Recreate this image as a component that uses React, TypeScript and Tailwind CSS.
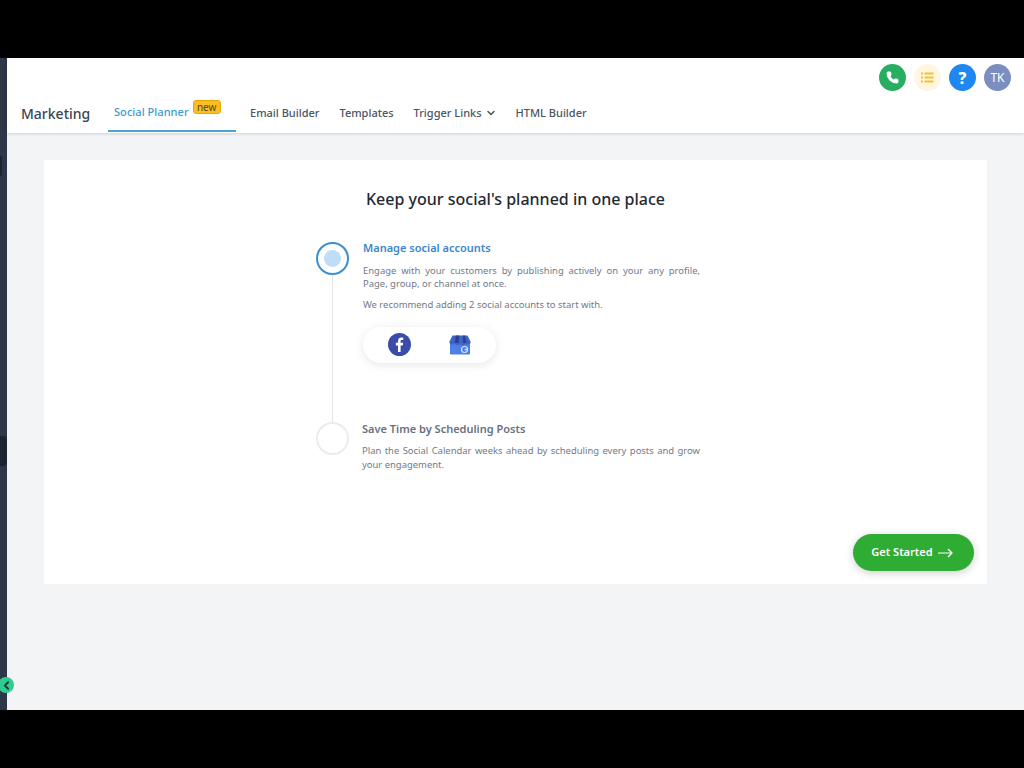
import React from 'react';
import { ChevronDown, ChevronLeft, Phone } from 'lucide-react';

const tabs = ['Email Builder', 'Templates'];

const App: React.FC = () => {
  return (
    <div className="relative h-[768px] w-[1024px] overflow-hidden bg-black pt-[58px] font-['Noto_Sans','Open_Sans',sans-serif]">
      <div className="flex h-[652px]">
        {/* collapsed sidebar */}
        <div className="relative w-[7px] shrink-0 bg-[#2d3748]">
          <div className="absolute left-0 top-[98px] h-[20px] w-[2px] rounded-r bg-[#1c2432]" />
          <div className="absolute left-0 top-[378px] h-[30px] w-[7px] rounded-r bg-[#1c2432]" />
        </div>

        <div className="flex min-w-0 flex-1 flex-col bg-[#f3f4f6]">
          {/* header */}
          <header className="relative z-10 flex h-[75px] shrink-0 flex-col bg-white shadow-[0_1px_3px_rgba(0,0,0,0.15)]">
            <div className="flex justify-end gap-[8px] pr-[13px] pt-[6px]">
              <div className="flex h-[27px] w-[27px] items-center justify-center rounded-full bg-[#27ae60]">
                <Phone size={13} className="fill-white text-white" />
              </div>
              <div className="flex h-[27px] w-[27px] items-center justify-center rounded-full bg-[#fef6e0]">
                <svg width="13" height="11" viewBox="0 0 13 11" fill="#f5bf2e">
                  <rect x="0" y="0.5" width="2" height="2" />
                  <rect x="3.5" y="0.5" width="9" height="2" />
                  <rect x="0" y="4.5" width="2" height="2" />
                  <rect x="3.5" y="4.5" width="9" height="2" />
                  <rect x="0" y="8.5" width="2" height="2" />
                  <rect x="3.5" y="8.5" width="9" height="2" />
                </svg>
              </div>
              <div className="flex h-[27px] w-[27px] items-center justify-center rounded-full bg-[#1e88f0] text-[16px] font-extrabold leading-none text-white">
                ?
              </div>
              <div className="flex h-[27px] w-[27px] items-center justify-center rounded-full bg-[#7a8fc0] text-[12px] leading-none text-white">
                TK
              </div>
            </div>

            <div className="mt-[3px] flex flex-1 items-stretch pb-[1px] pl-[14px]">
              <div className="flex w-[87px] items-center text-[14px] font-medium text-[#3c4653]">Marketing</div>
              <div className="flex w-[128px] items-center border-b-2 border-[#4aa3d0] pl-[6px]">
                <span className="text-[11.1px] font-medium text-[#3d9bca]">Social Planner</span>
                <span className="mb-[11px] ml-[4px] flex h-[14px] w-[28px] items-center justify-center rounded-[3px] border border-[#e8a80c] bg-[#fbbf24] text-[10px] leading-none text-[#5a4306]">
                  new
                </span>
              </div>
              <div className="ml-[14px] flex items-center gap-[20px] text-[11px] font-medium text-[#4b5563]">
                {tabs.map((t) => (
                  <span key={t}>{t}</span>
                ))}
                <span className="flex items-center gap-[3px]">
                  Trigger Links
                  <ChevronDown size={12} strokeWidth={3} className="-mr-[1px]" />
                </span>
                <span>HTML Builder</span>
              </div>
            </div>
          </header>

          {/* body */}
          <main className="pl-[37px] pt-[27px]">
            <div className="flex h-[424px] w-[943px] flex-col bg-white">
              <h1 className="pt-[28px] text-center text-[16px] font-medium leading-[22px] text-[#1f2933]">
                Keep your social's planned in one place
              </h1>

              <div className="ml-[272px] mt-[32px] flex w-[384px] flex-col">
                {/* step 1 */}
                <div className="flex h-[180px]">
                  <div className="flex w-[33px] shrink-0 flex-col items-center">
                    <div className="flex h-[33px] w-[33px] shrink-0 items-center justify-center rounded-full border-2 border-[#3c8fcf]">
                      <div className="h-[17px] w-[17px] rounded-full bg-[#bfdcf8]" />
                    </div>
                    <div className="w-px flex-1 bg-[#e2e6ea]" />
                  </div>
                  <div className="ml-[14px] flex-1">
                    <div className="-mt-[1px] text-[11px] font-semibold leading-[13px] text-[#3b87c8]">Manage social accounts</div>
                    <p className="mt-[9.5px] text-justify text-[9.45px] leading-[13.5px] text-[#727a87]">
                      Engage with your customers by publishing actively on your any profile, Page, group, or channel at once.
                    </p>
                    <p className="mt-[7.5px] text-[9.45px] leading-[13.5px] text-[#727a87]">
                      We recommend adding 2 social accounts to start with.
                    </p>
                    <div className="mt-[15px] flex h-[36px] w-[133px] items-center rounded-full bg-white pl-[25px] shadow-[0_2px_10px_rgba(0,0,0,0.1)]">
                      <svg width="23" height="23" viewBox="0 0 23 23">
                        <circle cx="11.5" cy="11.5" r="11.5" fill="#3b4ba8" />
                        <path
                          d="M12.6 19v-6.6h2.2l.35-2.6H12.6V8.2c0-.75.2-1.25 1.3-1.25h1.35V4.65C15 4.6 14.2 4.55 13.3 4.55c-2 0-3.3 1.2-3.3 3.4v1.85H7.8v2.6H10V19h2.6z"
                          fill="#fff"
                        />
                      </svg>
                      <svg className="ml-[38px]" width="22" height="20" viewBox="0 0 22 20">
                        <path d="M1 8h20v10.5a1 1 0 0 1-1 1H2a1 1 0 0 1-1-1z" fill="#4a80e8" />
                        <path d="M3.5 0.5h15L21.5 6.5a2.6 2.6 0 0 1-5.2 1 2.6 2.6 0 0 1-5.3 0 2.6 2.6 0 0 1-5.3 0 2.6 2.6 0 0 1-5.2-1z" fill="#3f63c4" />
                        <path d="M7 0.5h3.2L9.6 8H5.6zM14 .5h1.8L17.6 8h-3.4z" fill="#2c3f96" />
                        <circle cx="15.5" cy="14.5" r="3" fill="none" stroke="#d5e3fb" strokeWidth="1.2" />
                        <rect x="15.5" y="14" width="3" height="1.1" fill="#d5e3fb" />
                      </svg>
                    </div>
                  </div>
                </div>

                {/* step 2 */}
                <div className="flex">
                  <div className="h-[33px] w-[33px] shrink-0 rounded-full border-2 border-[#e9ecef]" />
                  <div className="ml-[13px] flex-1">
                    <div className="text-[11px] font-semibold leading-[14px] text-[#697180]">Save Time by Scheduling Posts</div>
                    <p className="mt-[8px] text-justify text-[9.45px] leading-[13.5px] text-[#727a87]">
                      Plan the Social Calendar weeks ahead by scheduling every posts and grow your engagement.
                    </p>
                  </div>
                </div>
              </div>

              <div className="mr-[13px] mt-auto mb-[13px] self-end">
                <button className="flex h-[37px] w-[121px] items-center justify-center gap-[5px] rounded-full bg-[#2fac34] pr-[3px] text-[11px] font-semibold text-white shadow-[0_2px_8px_rgba(0,0,0,0.2)]">
                  Get Started
                  <svg width="15" height="10" viewBox="0 0 15 10" fill="none" stroke="#fff" strokeWidth="1.2">
                    <path d="M0 5h14M10 1l4 4-4 4" />
                  </svg>
                </button>
              </div>
            </div>
          </main>
        </div>
      </div>

      {/* sidebar toggle */}
      <div className="absolute left-[-2px] top-[677px] flex h-[16px] w-[16px] items-center justify-center rounded-full bg-[#2ecc8f]">
        <ChevronLeft size={13} strokeWidth={3.5} className="text-[#1f3a3a]" />
      </div>
    </div>
  );
};

export default App;
